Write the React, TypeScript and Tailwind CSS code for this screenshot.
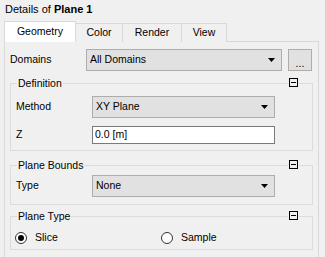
import React from 'react'

const Arrow: React.FC = () => (
  <svg width="7" height="4" viewBox="0 0 7 4" className="shrink-0">
    <polygon points="0,0 7,0 3.5,4" fill="#000" />
  </svg>
)

const Select: React.FC<{ value: string; className: string }> = ({ value, className }) => (
  <div className={`flex items-center justify-between border border-[#adadad] bg-[#e1e1e1] pl-[3px] pr-[6px] ${className}`}>
    <span>{value}</span>
    <Arrow />
  </div>
)

const Collapse: React.FC = () => (
  <div className="absolute -top-[6px] right-[13px] bg-[#f0f0f0] px-[1px]">
    <div className="flex h-[9px] w-[9px] items-center justify-center border border-black">
      <div className="h-px w-[5px] bg-black" />
    </div>
  </div>
)

const Group: React.FC<{ title: string; className: string; children: React.ReactNode }> = ({ title, className, children }) => (
  <div className={`relative mx-[5px] border border-[#dcdcdc] ${className}`}>
    <span className="absolute -top-[7px] left-[6px] bg-[#f0f0f0] px-[1px] leading-[12px]">{title}</span>
    <Collapse />
    {children}
  </div>
)

const Radio: React.FC<{ label: string; checked?: boolean; className?: string }> = ({ label, checked, className }) => (
  <div className={`flex items-center ${className ?? ''}`}>
    <div className="flex h-[12px] w-[12px] items-center justify-center rounded-full border border-[#333] bg-white">
      {checked && <div className="h-[6px] w-[6px] rounded-full bg-black" />}
    </div>
    <span className="ml-[8px]">{label}</span>
  </div>
)

const App: React.FC = () => {
  const tabs = ['Geometry', 'Color', 'Render', 'View']
  const widths = ['w-[72px]', 'w-[48px]', 'w-[60px]', 'w-[46px]']

  return (
    <div className="h-[257px] w-[325px] overflow-hidden bg-[#f0f0f0] text-[10.5px] text-black" style={{ fontFamily: '"Liberation Sans", Arial, sans-serif' }}>
      <div className="h-[21px] pl-[5px] pt-[3px] text-[11px] leading-[13px]">
        Details of <span className="font-bold">Plane 1</span>
      </div>

      <div className="flex h-[21px] items-end pl-[4px]">
        {tabs.map((t, i) => (
          <div
            key={t}
            className={`flex items-center justify-center border border-b-0 border-[#d9d9d9] ${widths[i]} ${
              i === 0 ? 'relative z-10 h-[21px] bg-white' : '-ml-px h-[19px] bg-[#f0f0f0]'
            }`}
          >
            {t}
          </div>
        ))}
      </div>

      <div className="-mt-px ml-[4px] h-[230px] w-[315px] border border-[#d9d9d9] pt-[7px]">
        <div className="flex items-center">
          <span className="w-[81px] pl-[5px]">Domains</span>
          <Select value="All Domains" className="h-[22px] w-[196px]" />
          <div className="ml-[6px] flex h-[22px] w-[24px] items-end justify-center border border-[#adadad] bg-[#e1e1e1] pb-[2px] leading-[10px]">
            ...
          </div>
        </div>

        <Group title="Definition" className="mt-[12px] pb-[6px] pt-[12px]">
          <div className="flex items-center">
            <span className="w-[81px] pl-[5px]">Method</span>
            <Select value="XY Plane" className="h-[22px] w-[183px]" />
          </div>
          <div className="mt-[8px] flex items-center">
            <span className="w-[81px] pl-[5px]">Z</span>
            <div className="flex h-[18px] w-[183px] items-center border border-[#7a7a7a] bg-white pl-[2px]">0.0 [m]</div>
          </div>
        </Group>

        <Group title="Plane Bounds" className="mt-[14px] pb-[7px] pt-[9px]">
          <div className="flex items-center">
            <span className="w-[81px] pl-[5px]">Type</span>
            <Select value="None" className="h-[22px] w-[183px]" />
          </div>
        </Group>

        <Group title="Plane Type" className="mt-[11px] pb-[3px] pt-[13px]">
          <div className="flex h-[16px] items-center pl-[4px]">
            <Radio label="Slice" checked className="w-[146px]" />
            <Radio label="Sample" />
          </div>
        </Group>
      </div>
    </div>
  )
}

export default App
